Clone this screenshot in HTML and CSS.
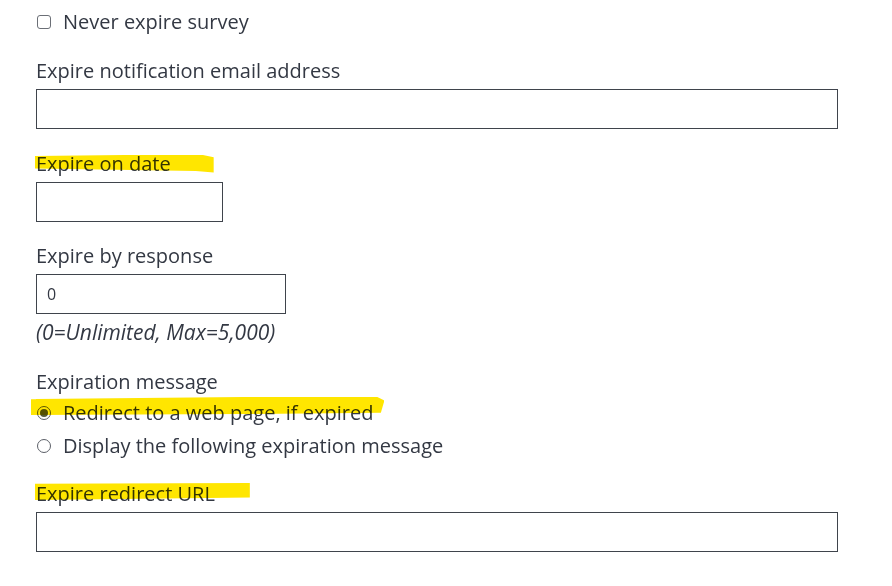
FILE: index.html
```html
<!DOCTYPE html>
<html lang="en">
<head>
    <meta charset="UTF-8">
    <title>Survey expiration</title>
    <link rel="stylesheet" href="styles.css">
</head>
<body>

    <div class="settings">
        <!-- never expire -->
        <label class="check-row">
            <span class="box"></span>
            Never expire survey
        </label>

        <div class="field">
            <label class="field-label" for="notify-email">Expire notification email address</label>
            <input type="text" id="notify-email" class="text-input wide">
        </div>

        <div class="field">
            <label class="field-label" for="expire-date"><span class="marker marker-date">Expire on date</span></label>
            <input type="text" id="expire-date" class="text-input date">
        </div>

        <div class="field">
            <label class="field-label" for="expire-count">Expire by response</label>
            <input type="text" id="expire-count" class="text-input count" value="0">
            <p class="hint">(0=Unlimited, Max=5,000)</p>
        </div>

        <!-- expiration message -->
        <div class="field">
            <div class="field-label group">Expiration message</div>
            <label class="radio-row">
                <span class="dot checked"></span>
                <span class="marker marker-radio">Redirect to a web page, if expired</span>
            </label>
            <label class="radio-row">
                <span class="dot"></span>
                Display the following expiration message
            </label>
        </div>

        <div class="field tight">
            <label class="field-label" for="redirect-url"><span class="marker marker-url">Expire redirect URL</span></label>
            <input type="text" id="redirect-url" class="text-input wide">
        </div>
    </div>

</body>
</html>
```
FILE: styles.css
```css
body {
    margin: 0;
    background-color: #ffffff;
    font-family: "Open Sans", "Liberation Sans", Arial, sans-serif;
    color: #333843;
}

.settings {
    width: 802px;
    padding: 9px 0 0 36px;
}

.check-row, .radio-row {
    display: flex;
    align-items: center;
    gap: 12px;
    font-size: 20px;
    line-height: 26px;
}

.box {
    width: 12px;
    height: 12px;
    border: 1px solid #6b6f76;
    border-radius: 3px;
    margin-left: 1px;
}

.field {
    margin-top: 23px;
}

.field + .field {
    margin-top: 21.5px;
}

.field.tight {
    margin-top: 19px;
}

.field-label {
    display: block;
    font-size: 20px;
    line-height: 26px;
    margin-bottom: 5px;
}

.field-label.group {
    margin-bottom: 1px;
}

.text-input {
    display: block;
    box-sizing: border-box;
    height: 40px;
    padding: 0 10px;
    border: 1px solid #3f444c;
    border-radius: 0;
    font-family: inherit;
    font-size: 16px;
    color: #333843;
}

.wide {
    width: 802px;
}

.date {
    width: 187px;
}

.count {
    width: 250px;
}

.hint {
    margin: 5px 0 0;
    padding-bottom: 2.5px;
    font-size: 21px;
    line-height: 26px;
    font-style: italic;
}

.radio-row {
    line-height: 33px;
}

.dot {
    box-sizing: border-box;
    width: 14px;
    height: 14px;
    border: 1px solid #5c6068;
    border-radius: 50%;
    margin-left: 1px;
    position: relative;
}

.dot.checked::after {
    content: "";
    position: absolute;
    left: 2px;
    top: 2px;
    width: 8px;
    height: 8px;
    border-radius: 50%;
    background-color: #555a3a;
}

/* yellow highlighter strokes over the text */
.marker {
    position: relative;
}

.marker::after {
    content: "";
    position: absolute;
    background-color: #ffe600;
    mix-blend-mode: multiply;
    pointer-events: none;
}

.marker-date::after {
    left: -1px;
    right: -43px;
    top: 5px;
    height: 18px;
    clip-path: polygon(0 8%, 75% 0, 94% 3%, 100% 15%, 100% 100%, 90% 92%, 0 78%);
}

.marker-radio::after {
    left: -32px;
    right: -11px;
    top: 1px;
    height: 18px;
    clip-path: polygon(0 12%, 60% 0, 98% 0, 100% 20%, 99% 88%, 60% 95%, 0 100%);
}

.marker-url::after {
    left: -1px;
    right: -35px;
    top: 3px;
    height: 17px;
    clip-path: polygon(0 5%, 100% 0, 100% 85%, 50% 92%, 0 100%);
}
```
